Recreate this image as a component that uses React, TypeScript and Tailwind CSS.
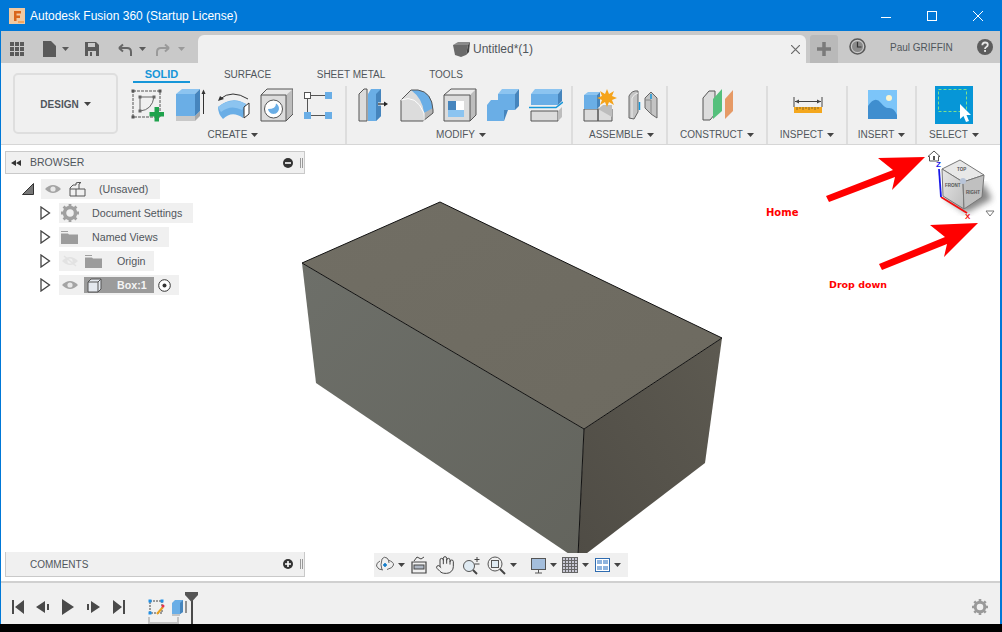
import type { ReactNode } from "react";
import { Hand } from "lucide-react";

const BLUE = "#6aaee6";
const DARK = "#4685bd";
const LINE = "#555555";

function Caret({ color = "#444444" }: { color?: string }) {
  return (
    <svg width="7" height="4" viewBox="0 0 7 4" className="shrink-0">
      <path d="M0 0H7L3.5 4Z" fill={color} />
    </svg>
  );
}

function Ico({ children, wide }: { children: ReactNode; wide?: boolean }) {
  return (
    <svg width={wide ? 38 : 36} height="38" viewBox={wide ? "0 0 38 38" : "0 0 36 38"} className="shrink-0">
      {children}
    </svg>
  );
}

function Group({ label, className, children }: { label: string; className: string; children: ReactNode }) {
  return (
    <div className={`flex flex-col h-full border-r-2 border-[#dddddd] ${className}`}>
      <div className="flex h-[38px]">{children}</div>
      <div className="flex items-center justify-center gap-[4px] h-[19px] mt-[1px] text-[10px] text-[#50565c]">
        {label}
        <Caret />
      </div>
    </div>
  );
}

function Tab({ children, className }: { children: ReactNode; className: string }) {
  return <div className={`text-center text-[10px] text-[#50565c] ${className}`}>{children}</div>;
}

function Eye({ faded }: { faded?: boolean }) {
  return (
    <svg width="18" height="12" viewBox="0 0 18 12" className="shrink-0">
      <path d="M1 6Q9 -2 17 6Q9 14 1 6Z" fill={faded ? "#e2e2e2" : "#a4a4a4"} />
      <circle cx="9" cy="6" r="2.6" fill={faded ? "#f0f0f0" : "#e8e8e8"} />
      {faded && <path d="M3 1L15 11" stroke="#e2e2e2" strokeWidth="1.5" />}
    </svg>
  );
}

function Folder() {
  return (
    <svg width="17" height="13" viewBox="0 0 17 13" className="shrink-0">
      <path d="M0 0H7V1H0Z" fill="#a0a0a0" />
      <path d="M0 2.5H7L8 3.5H17V13H0Z" fill="#9c9c9c" />
    </svg>
  );
}

function Expand() {
  return (
    <svg width="11" height="14" viewBox="0 0 11 14" className="shrink-0">
      <path d="M1 1L9.5 7L1 13Z" fill="#ffffff" stroke="#444444" strokeWidth="1.3" />
    </svg>
  );
}

function TreeRow({ children, className }: { children: ReactNode; className: string }) {
  return (
    <div className="flex items-center h-[20px] pl-[35px]">
      <Expand />
      <div className={`flex items-center h-[20px] ml-[8px] bg-[#f0f0f0] text-[10.7px] text-[#50565c] ${className}`}>
        {children}
      </div>
    </div>
  );
}

function PanelEnd({ minus }: { minus?: boolean }) {
  return (
    <div className="ml-auto flex items-center gap-[7px] pr-[1px]">
      <svg width="10" height="10" viewBox="0 0 10 10">
        <circle cx="5" cy="5" r="5" fill="#333333" />
        <path d={minus ? "M2 5H8" : "M2 5H8M5 2V8"} stroke="#ffffff" strokeWidth="1.6" />
      </svg>
      <div className="w-[3px] h-[10px] border-x border-[#999999]" />
    </div>
  );
}

function NavIcon({ children }: { children: ReactNode }) {
  return (
    <svg width="20" height="20" viewBox="0 0 20 20" className="shrink-0">
      {children}
    </svg>
  );
}

function App() {
  return (
    <div className="w-[1002px] h-[632px] flex flex-col bg-black overflow-hidden font-['Liberation_Sans',sans-serif]">
      <div className="h-[624px] flex flex-col bg-[#0078d7] pl-[1px] pr-[2px]">
        {/* title bar */}
        <div className="h-[31px] flex items-center shrink-0 -mr-[2px]">
          <svg width="16" height="16" viewBox="0 0 16 16" className="ml-[8px] shrink-0">
            <rect width="16" height="16" fill="#f2c9a0" />
            <path d="M5 3H12V5.5H7.5V7.5H11V10H7.5V13H5Z" fill="#d9651a" />
            <path d="M9 13H15V15H9Z" fill="#f6a55d" />
          </svg>
          <span className="ml-[5px] text-[12px] text-white">
            Autodesk Fusion 360 (Startup License)
          </span>
          <div className="ml-auto flex items-center">
            <svg width="46" height="12" viewBox="0 0 46 12">
              <path d="M18 7.5H28" stroke="#ffffff" />
            </svg>
            <svg width="46" height="12" viewBox="0 0 46 12">
              <rect x="18.5" y="1.5" width="9" height="9" fill="none" stroke="#ffffff" />
            </svg>
            <svg width="46" height="12" viewBox="0 0 46 12" className="mr-[1px]">
              <path d="M18 1L28 11M28 1L18 11" stroke="#ffffff" />
            </svg>
          </div>
        </div>

        {/* tab row */}
        <div className="h-[32px] flex shrink-0 bg-[#c9c9c9]">
          <div className="w-[197px] flex items-center pt-[4px] shrink-0">
            <svg width="14" height="14" viewBox="0 0 14 14" className="ml-[9px]" fill="#5a5a5a">
              <path d="M0 0H4V4H0ZM5 0H9V4H5ZM10 0H14V4H10ZM0 5H4V9H0ZM5 5H9V9H5ZM10 5H14V9H10ZM0 10H4V14H0ZM5 10H9V14H5ZM10 10H14V14H10Z" />
            </svg>
            <svg width="13" height="16" viewBox="0 0 13 16" className="ml-[19px]">
              <path d="M0 0H8L13 5V16H0Z" fill="#5a5a5a" />
            </svg>
            <div className="ml-[6px]"><Caret color="#5a5a5a" /></div>
            <svg width="14" height="14" viewBox="0 0 14 14" className="ml-[16px]">
              <path d="M0 0H11L14 3V14H0Z" fill="#5a5a5a" />
              <path d="M3 1H10V5H3ZM3 9H11V14H3Z" fill="#c9c9c9" />
              <path d="M5 10H7V14H5Z" fill="#5a5a5a" />
            </svg>
            <svg width="14" height="13" viewBox="0 0 14 13" className="ml-[19px]" fill="none">
              <path d="M1 5H9Q13 5 13 9V13M1 5L5 1.5M1 5L5 8.5" stroke="#666666" strokeWidth="2" />
            </svg>
            <div className="ml-[7px]"><Caret color="#5a5a5a" /></div>
            <svg width="14" height="13" viewBox="0 0 14 13" className="ml-[10px]" fill="none">
              <path d="M13 5H5Q1 5 1 9V13M13 5L9 1.5M13 5L9 8.5" stroke="#9a9a9a" strokeWidth="2" />
            </svg>
            <div className="ml-[8px]"><Caret color="#9a9a9a" /></div>
          </div>
          <div className="w-[608px] mt-[4px] bg-[#f0f0f0] rounded-tl-[6px] rounded-tr-[6px] flex items-center shrink-0">
            <svg width="17" height="15" viewBox="0 0 17 15" className="ml-[255px]">
              <path d="M0 3L5 0H17L15 3Z" fill="#8a8a8a" />
              <path d="M0 3H15L13 13L8 15L2 13Z" fill="#6a6a6a" />
              <path d="M15 3L17 0L16 10L13 13Z" fill="#444444" />
            </svg>
            <span className="ml-[3px] text-[12px] text-[#50565c]">Untitled*(1)</span>
            <svg width="9" height="9" viewBox="0 0 9 9" className="ml-[258px]">
              <path d="M0 0L9 9M9 0L0 9" stroke="#6a6a6a" strokeWidth="1.2" />
            </svg>
          </div>
          <div className="w-[28px] h-[28px] mt-[4px] ml-[4px] bg-[#b9b9b9] rounded-t-[3px] flex items-center justify-center shrink-0">
            <svg width="14" height="14" viewBox="0 0 14 14">
              <path d="M7 0V14M0 7H14" stroke="#7a7a7a" strokeWidth="3.5" />
            </svg>
          </div>
          <svg width="17" height="17" viewBox="0 0 17 17" className="ml-[11px] mt-[7px] shrink-0" fill="none">
            <circle cx="8.5" cy="8.5" r="7.5" stroke="#5a5a5a" strokeWidth="1.6" />
            <circle cx="8.5" cy="8.5" r="5.5" fill="#8a8a8a" />
            <path d="M8.5 4V9H12.5" stroke="#333333" strokeWidth="1.2" />
          </svg>
          <span className="ml-[24px] mt-[9px] text-[10px] text-[#50565c] shrink-0 w-[63px] whitespace-nowrap">Paul GRIFFIN</span>
          <svg width="16" height="16" viewBox="0 0 16 16" className="ml-[24px] mt-[8px] shrink-0">
            <circle cx="8" cy="8" r="8" fill="#5c5c5c" />
            <path d="M5.3 6.2Q5.5 3.5 8 3.5Q10.8 3.5 10.8 5.8Q10.8 7.2 9.3 8Q8 8.7 8 10" fill="none" stroke="#e6e6e6" strokeWidth="1.8" />
            <rect x="7.1" y="11" width="1.9" height="1.9" fill="#e6e6e6" />
          </svg>
        </div>

        {/* ribbon */}
        <div className="h-[82px] flex bg-[#f0f0f0] border-b border-[#d6d6d6] shrink-0">
          <div className="w-[105px] h-[61px] ml-[12px] mt-[10px] border-2 border-[#dedede] rounded-[5px] flex items-center justify-center gap-[5px] pt-[1px] text-[10px] font-bold text-[#50565c] shrink-0">
            DESIGN
            <Caret />
          </div>
          <div className="flex flex-col ml-[7px] flex-1">
            <div className="flex h-[24px] pl-[8px] pt-[5px]">
              <div className="w-[57px] h-[15px] text-center text-[11px] font-bold leading-[13px] text-[#1696d8] border-b-2 border-[#1696d8]">SOLID</div>
              <Tab className="w-[115px] leading-[13px]">SURFACE</Tab>
              <Tab className="w-[92px] leading-[13px]">SHEET METAL</Tab>
              <Tab className="w-[98px] leading-[13px]">TOOLS</Tab>
            </div>
            <div className="flex h-[58px]">
              <Group label="CREATE" className="w-[222px] pl-[6px] pr-[10px]">
                <div className="flex gap-[6px]">
                  <Ico>
                    <path d="M2 5H29V31H2Z" fill="none" stroke={LINE} strokeDasharray="3 1" />
                    <path d="M0.500 3.500h3v3h-3zM27.500 3.500h3v3h-3zM0.500 29.500h3v3h-3z" fill={LINE} />
                    <path d="M9 11V25M9 25Q21 24 23 11H9" fill="none" stroke="#666666" />
                    <path d="M7.500 9.500h3v3h-3zM21.500 9.500h3v3h-3zM7.500 23.500h3v3h-3z" fill="#666666" />
                    <path d="M23.500 21h4.500v5h5v4.500h-5v5h-4.500v-5h-5v-4.500h5z" fill="#1fa24c" />
                  </Ico>
                  <Ico>
                    <path d="M3 30H22V35H3Z" fill="#c8c8c8" />
                    <path d="M22 30L27 25V30L22 35Z" fill="#a8a8a8" />
                    <path d="M3 8H22V30H3Z" fill={BLUE} />
                    <path d="M3 8L9 3H27L22 8Z" fill="#8cc4f0" />
                    <path d="M22 8L27 3V25L22 30Z" fill={DARK} />
                    <path d="M30.500 5V28" stroke="#333333" />
                    <path d="M28.500 8L30.500 3.500L32.500 8Z" fill="#333333" />
                  </Ico>
                  <Ico>
                    <path d="M3 21Q17 9 31 18L28 32Q17 24 8 33Q3 28 3 21Z" fill={BLUE} />
                    <path d="M3 21Q17 10 31 18L27 24Q16 18 6 26Z" fill="#8cc4f0" />
                    <path d="M29 21L34 17V28L29 32Z" fill="#ffffff" stroke="#333333" />
                    <path d="M5 13Q17 3 33 13" fill="none" stroke="#333333" />
                    <path d="M3 15L5 10L9 13Z" fill="#333333" />
                  </Ico>
                  <Ico>
                    <path d="M4 9H29V35H4Z" fill="#dcdcdc" />
                    <path d="M4 9L10 3H36L29 9Z" fill="#e8e8e8" />
                    <path d="M29 9L36 3V28L29 35Z" fill="#bdbdbd" />
                    <path d="M4 9L10 3H36V28L29 35H4ZM4 9H29V35" fill="none" stroke={LINE} />
                    <circle cx="16.500" cy="23" r="9" fill="#ffffff" stroke={LINE} />
                    <path d="M11 23A5.500 5.500 0 1 0 19 17.500Q19 23 11 23Z" fill={BLUE} />
                  </Ico>
                  <Ico>
                    <rect x="5.500" y="6.500" width="6" height="6" fill="#ffffff" stroke="#555555" />
                    <rect x="26" y="6" width="7" height="7" fill={BLUE} />
                    <rect x="5" y="26" width="7" height="7" fill={BLUE} />
                    <rect x="26" y="26" width="7" height="7" fill={BLUE} />
                    <path d="M12 9.500H26M8.500 13V26M12 29.500H26" stroke="#555555" />
                  </Ico>
                </div>
              </Group>
              <Group label="MODIFY" className="w-[226px] pl-[8px] pr-[4px]">
                <div className="flex gap-[7px]">
                  <Ico>
                    <path d="M4 35V8L9 3H12V35Z" fill="#dcdcdc" stroke={LINE} />
                    <path d="M13 8L16 3H26V30L21 35H13Z" fill={BLUE} />
                    <path d="M21 8L26 3V30L21 35Z" fill={DARK} />
                    <path d="M23 18H30" stroke="#ffffff" strokeWidth="3" />
                    <path d="M23 18H31" stroke="#222222" strokeWidth="1.300" />
                    <path d="M29 15.500L33 18L29 20.500Z" fill="#222222" />
                  </Ico>
                  <Ico>
                    <path d="M3 35V14L13 4H20Q34 6 35 24V27L25 35Z" fill="#dcdcdc" />
                    <path d="M13 4H20Q34 6 35 24L26 27Q25 13 13 4Z" fill={BLUE} />
                    <path d="M25 35L26 27L35 22V27Z" fill="#b5b5b5" />
                    <path d="M3 35V14L13 4H20Q34 6 35 24V27L25 35Z" fill="none" stroke={LINE} />
                    <path d="M3 14Q18 8 26 27V35" fill="none" stroke="#ffffff" />
                  </Ico>
                  <Ico>
                    <path d="M3 9H29V35H3Z" fill="#dcdcdc" />
                    <path d="M3 9L10 3H35L29 9Z" fill="#ececec" />
                    <path d="M29 9L35 3V29L29 35Z" fill="#bdbdbd" />
                    <path d="M3 9L10 3H35V29L29 35H3ZM3 9H29V35" fill="none" stroke={LINE} />
                    <path d="M7 15H23V31H7Z" fill="#ffffff" />
                    <path d="M7 15H15V24H7Z" fill={DARK} />
                    <path d="M7 24H15L23 24V31H7Z" fill="#8cc4f0" />
                  </Ico>
                  <Ico>
                    <path d="M14 8L18 3H35L31 8Z" fill="#8cc4f0" />
                    <path d="M14 8H31V24H14Z" fill={BLUE} />
                    <path d="M31 8L35 3V20L31 24Z" fill={DARK} />
                    <path d="M3 19L7 14H14V24H20V35H3Z" fill={BLUE} />
                    <path d="M20 24H24L20 35Z" fill={DARK} />
                  </Ico>
                  <Ico>
                    <path d="M4 8L8 3H35L31 8Z" fill="#8cc4f0" />
                    <path d="M4 8H31V19H4Z" fill={BLUE} />
                    <path d="M31 8L35 3V15L31 19Z" fill={DARK} />
                    <path d="M4 25H31V35H4Z" fill="#dcdcdc" stroke={LINE} />
                    <path d="M31 25L35 21V31L31 35Z" fill="#bdbdbd" />
                    <path d="M2 21.500H29L36 16" fill="none" stroke="#1696d8" strokeWidth="1.500" />
                  </Ico>
                </div>
              </Group>
              <Group label="ASSEMBLE" className="w-[95px] pl-[8px] pr-[4px]">
                <div className="flex gap-[8px]">
                  <Ico>
                    <path d="M3 23H17V35H3ZM17 23H31V35H17Z" fill="#dcdcdc" stroke={LINE} />
                    <path d="M17 23L22 19H31V31" fill="#bdbdbd" />
                    <path d="M3 9L7 6H19L16 9Z" fill="#8cc4f0" />
                    <path d="M3 9H16V23H3Z" fill={BLUE} />
                    <path d="M16 9L19 6V20L16 23Z" fill={DARK} />
                    <path d="M26 3L28 8L33 5L31 10L36 12L31 14L33 19L28 16L26 21L24 16L19 19L21 14L16 12L21 10L19 5L24 8Z" fill="#f5a31a" />
                  </Ico>
                  <Ico>
                    <path d="M4 32V10Q7 4 13 5V26L9 33Z" fill="#c4c4c4" stroke="#666666" />
                    <path d="M7 32V12Q9 8 13 7" fill="none" stroke="#eeeeee" />
                    <path d="M20 22V12L26 6L32 12V32L26 28Z" fill="#c4c4c4" stroke="#666666" />
                    <path d="M20 14H26V28" fill="none" stroke="#888888" />
                    <path d="M14.500 16V24" stroke="#1696d8" strokeWidth="1.500" />
                    <path d="M26 8V13" stroke="#1696d8" strokeWidth="1.500" />
                  </Ico>
                </div>
              </Group>
              <Group label="CONSTRUCT" className="w-[100px]">
                <div className="flex justify-center w-full pl-[2px]">
                  <Ico>
                    <path d="M3 34V12L9 5H15V28L10 34Z" fill="#dcdcdc" stroke={LINE} />
                    <path d="M13 33V13L22 3V25Z" fill="#55c07c" />
                    <path d="M25 33V13L33 4V25Z" fill="#e69a66" />
                  </Ico>
                </div>
              </Group>
              <Group label="INSPECT" className="w-[80px]">
                <div className="flex justify-center w-full pl-[1px]">
                  <Ico>
                    <path d="M4 11V21M32 11V21" stroke="#444444" />
                    <path d="M5 15.500H31" stroke="#444444" />
                    <path d="M5 15.500L9 13.500V17.500ZM31 15.500L27 13.500V17.500Z" fill="#444444" />
                    <rect x="4" y="21" width="28" height="6" fill="#f4a71d" />
                    <path d="M7 21V24M10 21V23M13 21V24M16 21V23M19 21V24M22 21V23M25 21V24M28 21V23" stroke="#8a6a20" />
                  </Ico>
                </div>
              </Group>
              <Group label="INSERT" className="w-[69px]">
                <div className="flex justify-center w-full">
                  <Ico>
                    <rect x="4" y="4" width="29" height="29" fill="#7cc5f9" />
                    <circle cx="25" cy="12" r="3" fill="#fbf4cf" />
                    <path d="M4 33V20Q11 9 17 17Q21 22 24 22Q30 21 33 29V33Z" fill="#3f8ecf" />
                  </Ico>
                </div>
              </Group>
              <div className="flex flex-col w-[78px] items-center pr-[4px]">
                <div className="h-[38px]">
                  <Ico wide>
                    <rect width="38" height="38" fill="#0696d7" />
                    <rect x="3.500" y="3.500" width="28" height="22" fill="none" stroke="#7fe08a" strokeDasharray="3 2" />
                    <path d="M25 18V33L28.500 30L31 36L34 35L31.500 29H36Z" fill="#ffffff" />
                  </Ico>
                </div>
                <div className="flex items-center justify-center gap-[4px] h-[19px] mt-[1px] text-[10px] text-[#50565c]">
                  SELECT
                  <Caret />
                </div>
              </div>
            </div>
          </div>
        </div>

        {/* canvas */}
        <div className="relative h-[438px] flex bg-white border-b-2 border-[#d0d0d0] shrink-0">
          <svg width="999" height="436" viewBox="1 145 999 436" className="absolute left-0 top-0">
            <defs>
              <linearGradient id="topFace" x1="0" y1="0" x2="1" y2="1">
                <stop offset="0" stopColor="#716e64" />
                <stop offset="1" stopColor="#6d6a60" />
              </linearGradient>
              <linearGradient id="leftFace" x1="0" y1="0" x2="1" y2="1">
                <stop offset="0" stopColor="#6d6f69" />
                <stop offset="1" stopColor="#63645d" />
              </linearGradient>
              <linearGradient id="rightFace" x1="0" y1="1" x2="1" y2="0">
                <stop offset="0" stopColor="#4f4c45" />
                <stop offset="1" stopColor="#5d5a51" />
              </linearGradient>
              <linearGradient id="cubeLeft" x1="0" y1="0" x2="1" y2="1">
                <stop offset="0" stopColor="#e8e8e8" />
                <stop offset="1" stopColor="#bcbcbc" />
              </linearGradient>
              <filter id="cubeShadow">
                <feGaussianBlur stdDeviation="3" />
              </filter>
            </defs>
            <path d="M302 263L584 429L578 560L316 383Z" fill="url(#leftFace)" />
            <path d="M584 429L722 338L705 463L578 560Z" fill="url(#rightFace)" />
            <path d="M440 202L722 338L584 429L302 263Z" fill="url(#topFace)" stroke="#111111" />
            <path d="M584 429L578 556" stroke="#111111" />

            {/* annotation arrows */}
            <path d="M925 157L878 158L893 170L826 196L829 202L895 177L892 190Z" fill="#ff0000" />
            <path d="M978 223L930 225L945 237L879 264L882 270L947 244L944 257Z" fill="#ff0000" />

            {/* view cube */}
            <path d="M944 197L966 213L992 199L984 184Z" fill="#555555" opacity="0.7" filter="url(#cubeShadow)" />
            <path d="M934 151L940 156.500H938.500V161H929.500V156.500H928Z" fill="#ffffff" stroke="#555555" />
            <rect x="933" y="156" width="2" height="4" fill="#555555" />
            <path d="M941 197L967 213" stroke="#f01010" strokeWidth="1.800" />
            <path d="M939 169L941 197" stroke="#1818e8" strokeWidth="1.800" />
            <path d="M942 169L960 160L984 175L963 182Z" fill="#e8e8e8" stroke="#777777" />
            <path d="M942 169L963 182L964 209L943 196Z" fill="url(#cubeLeft)" stroke="#777777" />
            <path d="M963 182L984 175L982 197L964 209Z" fill="#c0c0c0" stroke="#777777" />
            <circle cx="963" cy="181" r="3" fill="#b8c4d8" />
            <text x="957" y="171" fontSize="4.500" fontWeight="700" fill="#555555" fontFamily="Liberation Sans, sans-serif">TOP</text>
            <text x="945" y="187" fontSize="4.500" fontWeight="700" fill="#555555" fontFamily="Liberation Sans, sans-serif">FRONT</text>
            <text x="966" y="194" fontSize="4.500" fontWeight="700" fill="#555555" fontFamily="Liberation Sans, sans-serif">RIGHT</text>
            <text x="936" y="167" fontSize="8" fontWeight="700" fill="#1818e8" fontFamily="Liberation Sans, sans-serif">Z</text>
            <text x="965" y="219" fontSize="8" fontWeight="700" fill="#f01010" fontFamily="Liberation Sans, sans-serif">X</text>
            <path d="M986 211H994L990 216Z" fill="#ffffff" stroke="#777777" />
          </svg>

          {/* browser + comments */}
          <div className="relative w-[300px] ml-[4px] flex flex-col justify-between pt-[6px] pb-[4px]">
            <div>
              <div className="h-[23px] flex items-center bg-[#f0f0f0] border border-[#c9c9c9] text-[10.5px] text-[#50565c]">
                <svg width="10" height="6" viewBox="0 0 10 6" className="ml-[5px]">
                  <path d="M5 0V6L0 3ZM10 0V6L5 3Z" fill="#333333" />
                </svg>
                <span className="ml-[9px]">BROWSER</span>
                <PanelEnd minus />
              </div>
              <div className="flex flex-col gap-[4px] mt-[5px]">
                <div className="flex items-center h-[20px] pl-[17px]">
                  <svg width="12" height="12" viewBox="0 0 12 12" className="shrink-0">
                    <path d="M11.500 0.500V11.500H0.500Z" fill="#777777" stroke="#333333" />
                  </svg>
                  <div className="flex items-center h-[20px] ml-[7px] w-[119px] bg-[#f0f0f0] text-[10.7px] text-[#50565c]">
                    <div className="ml-[3px]"><Eye /></div>
                    <svg width="17" height="15" viewBox="0 0 17 15" className="ml-[7px] shrink-0" fill="none">
                      <path d="M1 14V6L4 3H7V1L9 0.500H12L10 2V7H16V14ZM7 7H1M7 7V14M10 7L7 7" stroke="#555555" />
                    </svg>
                    <span className="ml-[13px]">(Unsaved)</span>
                  </div>
                </div>
                <TreeRow className="w-[134px]">
                  <svg width="18" height="18" viewBox="0 0 18 18" className="ml-[2px] shrink-0">
                    <circle cx="9" cy="9" r="5.500" fill="none" stroke="#a0a0a0" strokeWidth="3.500" />
                    <path d="M9 0V4M9 14V18M0 9H4M14 9H18M2.600 2.600L5.400 5.400M12.600 12.600L15.400 15.400M15.400 2.600L12.600 5.400M5.400 12.600L2.600 15.400" stroke="#a0a0a0" strokeWidth="2.800" />
                  </svg>
                  <span className="ml-[13px] whitespace-nowrap">Document Settings</span>
                </TreeRow>
                <TreeRow className="w-[110px]">
                  <div className="ml-[2px]"><Folder /></div>
                  <span className="ml-[14px] whitespace-nowrap">Named Views</span>
                </TreeRow>
                <TreeRow className="w-[95px]">
                  <div className="ml-[2px]"><Eye faded /></div>
                  <div className="ml-[6px]"><Folder /></div>
                  <span className="ml-[15px]">Origin</span>
                </TreeRow>
                <TreeRow className="w-[120px]">
                  <div className="ml-[2px]"><Eye /></div>
                  <div className="ml-[5px] w-[70px] h-[16px] bg-[#9b9b9b] flex items-center">
                    <svg width="15" height="15" viewBox="0 0 15 15" className="ml-[3px] shrink-0">
                      <path d="M1 14V4L4 1H14V11L11 14Z" fill="#e4e8ee" stroke="#555555" />
                      <path d="M1 4H11V14M11 4L14 1" fill="none" stroke="#555555" />
                    </svg>
                    <span className="ml-[15px] font-bold text-[#f4f4f4]">Box:1</span>
                  </div>
                  <svg width="13" height="13" viewBox="0 0 13 13" className="ml-[4px] shrink-0">
                    <circle cx="6.500" cy="6.500" r="5.800" fill="#ffffff" stroke="#333333" />
                    <circle cx="6.500" cy="6.500" r="2" fill="#333333" />
                  </svg>
                </TreeRow>
              </div>
            </div>
            <div className="h-[25px] flex items-center bg-[#f0f0f0] border border-[#c9c9c9] border-t-0 text-[10px] text-[#50565c]">
              <span className="ml-[24px]">COMMENTS</span>
              <PanelEnd />
            </div>
          </div>

          <span className="absolute left-[765px] top-[60px] text-[10px] font-bold text-[#ff0000] font-['DejaVu_Sans',sans-serif]">Home</span>
          <span className="absolute left-[828px] top-[133px] text-[9.5px] font-bold text-[#ff0000] font-['DejaVu_Sans',sans-serif]">Drop down</span>

          {/* navigation bar */}
          <div className="absolute left-[373px] top-[408px] w-[254px] h-[24px] bg-[#f0f0f0] flex items-center pl-[1px]">
            <NavIcon>
              <path d="M5 6Q1 8 1.500 11Q3 15 8 15M13 5Q19 7 18.500 10Q18 13 12 14.500" fill="none" stroke="#666666" />
              <path d="M7 15Q5 10 7 4Q9 1 12 3Q14 5 14 8" fill="none" stroke="#666666" />
              <path d="M8 10H12M10 8V12" stroke="#0a78c8" strokeWidth="1.500" />
            </NavIcon>
            <div className="ml-[3px]"><Caret /></div>
            <div className="ml-[4px]">
              <NavIcon>
                <path d="M3 7H17V18H3Z" fill="none" stroke="#444444" strokeWidth="1.200" />
                <path d="M5 6L8 2L12 4L15 2" fill="none" stroke="#444444" />
                <rect x="5" y="10" width="10" height="4" fill="#aeb6c2" stroke="#444444" />
              </NavIcon>
            </div>
            <div className="ml-[6px]">
              <Hand size={20} strokeWidth={1.200} color="#444444" />
            </div>
            <div className="ml-[6px]">
              <NavIcon>
                <circle cx="8" cy="11" r="5.500" fill="#dfeaf2" stroke="#555555" />
                <path d="M12 15L16 19" stroke="#444444" strokeWidth="2" />
                <path d="M16 2V7M13.500 4.500H18.500M13.500 9H18.500" stroke="#444444" />
              </NavIcon>
            </div>
            <div className="ml-[6px]">
              <NavIcon>
                <circle cx="8" cy="9" r="7" fill="none" stroke="#555555" />
                <rect x="4.500" y="5.500" width="7" height="7" fill="#dfeaf2" stroke="#555555" />
                <path d="M13 14L18 19" stroke="#444444" strokeWidth="2" />
              </NavIcon>
            </div>
            <div className="ml-[3px]"><Caret /></div>
            <div className="ml-[12px]">
              <NavIcon>
                <rect x="2.500" y="3.500" width="14" height="11" fill="#a4bedc" stroke="#555555" />
                <path d="M6 18H13M9.500 15V18" stroke="#555555" />
              </NavIcon>
            </div>
            <div className="ml-[1px]"><Caret /></div>
            <div className="ml-[4px]">
              <NavIcon>
                <rect x="1.500" y="2.500" width="15" height="15" fill="#c8c8d4" stroke="#666666" />
                <path d="M4.500 2V18M7.500 2V18M10.500 2V18M13.500 2V18M1 5.500H17M1 8.500H17M1 11.500H17M1 14.500H17" stroke="#666666" />
              </NavIcon>
            </div>
            <div className="ml-[1px]"><Caret /></div>
            <div className="ml-[4px]">
              <NavIcon>
                <rect x="2.500" y="3.500" width="14" height="13" fill="#ffffff" stroke="#2f6cb0" />
                <path d="M4 5H9V9H4ZM10 5H15V9H10ZM4 11H9V15H4ZM10 11H15V15H10Z" fill="#8fb4de" />
              </NavIcon>
            </div>
            <div className="ml-[1px]"><Caret /></div>
          </div>
        </div>

        {/* timeline */}
        <div className="h-[41px] relative flex items-center bg-[#f0f0f0] shrink-0 pt-[7px]">
          <svg width="12" height="14" viewBox="0 0 12 14" className="ml-[11px] shrink-0" fill="#4a4a4a">
            <path d="M0 0H2V14H0ZM12 0V14L3 7Z" />
          </svg>
          <svg width="14" height="12" viewBox="0 0 14 12" className="ml-[12px] shrink-0" fill="#4a4a4a">
            <path d="M9 0V12L0 6ZM11 3H13V9H11Z" />
          </svg>
          <svg width="12" height="16" viewBox="0 0 12 16" className="ml-[12px] shrink-0" fill="#4a4a4a">
            <path d="M0 0L12 8L0 16Z" />
          </svg>
          <svg width="14" height="12" viewBox="0 0 14 12" className="ml-[12px] shrink-0" fill="#4a4a4a">
            <path d="M5 0V12L14 6ZM1 3H3V9H1Z" />
          </svg>
          <svg width="12" height="14" viewBox="0 0 12 14" className="ml-[13px] shrink-0" fill="#4a4a4a">
            <path d="M0 0V14L9 7ZM10 0H12V14H10Z" />
          </svg>
          <svg width="17" height="17" viewBox="0 0 17 17" className="ml-[23px] shrink-0">
            <path d="M2 2H14V14H2Z" fill="none" stroke="#444444" strokeDasharray="2 1" />
            <path d="M0.500 0.500h3v3h-3zM12.500 0.500h3v3h-3zM0.500 12.500h3v3h-3z" fill="#1e90e8" />
            <path d="M9 15L15 8" stroke="#e8a020" strokeWidth="2" />
            <circle cx="15" cy="7" r="1.500" fill="#e83050" />
          </svg>
          <svg width="17" height="17" viewBox="0 0 17 17" className="ml-[6px] shrink-0">
            <path d="M1 4L4 1H12V13L9 15H1Z" fill={BLUE} />
            <path d="M9 4L12 1V13L9 15Z" fill={DARK} />
            <path d="M1 15H9V17H1Z" fill="#c4c4c4" />
            <path d="M15 2V14" stroke="#333333" />
          </svg>
          <div className="absolute left-[147px] bottom-0 w-[31px] h-[7px] border-x-2 border-b-2 border-[#c4c4c4] border-t-0" />
          <div className="absolute left-[190px] bottom-0 w-[2px] h-[26px] bg-[#4a4a4a]" />
          <svg width="13" height="10" viewBox="0 0 13 10" className="absolute left-[184px] top-[9px]">
            <path d="M0 0H13V3L6.500 10L0 3Z" fill="#555555" />
          </svg>
          <svg width="16" height="16" viewBox="0 0 16 16" className="ml-auto mr-[12px] shrink-0">
            <circle cx="8" cy="8" r="4.800" fill="none" stroke="#9a9a9a" strokeWidth="3" />
            <path d="M8 0V3.500M8 12.500V16M0 8H3.500M12.500 8H16M2.300 2.300L4.800 4.800M11.200 11.200L13.700 13.700M13.700 2.300L11.200 4.800M4.800 11.200L2.300 13.700" stroke="#9a9a9a" strokeWidth="2.600" />
          </svg>
        </div>
      </div>
    </div>
  );
}

export default App;
